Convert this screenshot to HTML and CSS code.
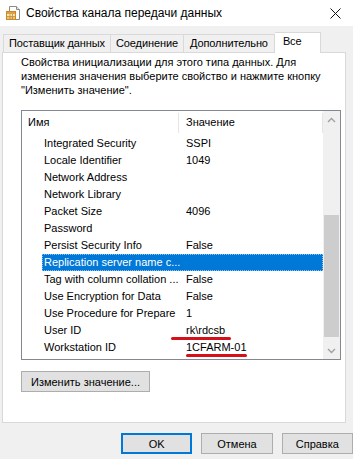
FILE: index.html
```html
<!DOCTYPE html>
<html lang="ru">
<head>
<meta charset="utf-8">
<title>Свойства канала передачи данных</title>
<link rel="stylesheet" href="styles.css">
</head>
<body>
<div class="window">
  <div class="titlebar">
    <svg class="app-icon" width="15" height="15" viewBox="0 0 15 15">
      <path d="M3.5 0.5h7l3 3v10h-10z" fill="#fff" stroke="#8a8a8a"/>
      <path d="M10.5 0.5v3h3" fill="#e8e8e8" stroke="#8a8a8a"/>
      <rect x="0.5" y="5.5" width="9" height="8" fill="#fbe7b5" stroke="#c98a2b"/>
      <rect x="1" y="6" width="8" height="2" fill="#e0a040"/>
      <path d="M1 10.5h8M1 12h8M4 8v5.5M6.5 8v5.5" stroke="#c98a2b" stroke-width="0.8"/>
    </svg>
    <span class="title">Свойства канала передачи данных</span>
    <svg class="close" width="11" height="11" viewBox="0 0 11 11">
      <path d="M0.5 0.5L10.5 10.5M10.5 0.5L0.5 10.5" stroke="#111" stroke-width="1"/>
    </svg>
  </div>

  <div class="tabs">
    <div class="tab">Поставщик данных</div>
    <div class="tab">Соединение</div>
    <div class="tab last">Дополнительно</div>
    <div class="tab active">Все</div>
  </div>

  <div class="panel">
    <p class="desc">Свойства инициализации для этого типа данных. Для изменения значения выберите свойство и нажмите кнопку "Изменить значение".</p>

    <div class="list">
      <div class="list-main">
        <div class="header">
          <div class="hcell hname">Имя</div>
          <div class="hcell hvalue">Значение</div>
        </div>
        <div class="rows">
          <div class="row"><span class="name">Integrated Security</span><span class="value">SSPI</span></div>
          <div class="row"><span class="name">Locale Identifier</span><span class="value">1049</span></div>
          <div class="row"><span class="name">Network Address</span><span class="value"></span></div>
          <div class="row"><span class="name">Network Library</span><span class="value"></span></div>
          <div class="row"><span class="name">Packet Size</span><span class="value">4096</span></div>
          <div class="row"><span class="name">Password</span><span class="value"></span></div>
          <div class="row"><span class="name">Persist Security Info</span><span class="value">False</span></div>
          <div class="row selected"><span class="name">Replication server name c...</span><span class="value"></span></div>
          <div class="row"><span class="name">Tag with column collation ...</span><span class="value">False</span></div>
          <div class="row"><span class="name">Use Encryption for Data</span><span class="value">False</span></div>
          <div class="row"><span class="name">Use Procedure for Prepare</span><span class="value">1</span></div>
          <div class="row"><span class="name">User ID</span><span class="value">rk\rdcsb</span></div>
          <div class="row"><span class="name">Workstation ID</span><span class="value">1CFARM-01</span></div>
        </div>
      </div>
      <div class="scrollbar">
        <div class="sb-btn">
          <svg width="9" height="6" viewBox="0 0 9 6"><path d="M1 5L4.5 1.5L8 5" fill="none" stroke="#a0a0a0" stroke-width="1.4"/></svg>
        </div>
        <div class="sb-track"><div class="sb-thumb"></div></div>
        <div class="sb-btn">
          <svg width="9" height="6" viewBox="0 0 9 6"><path d="M1 1L4.5 4.5L8 1" fill="none" stroke="#a0a0a0" stroke-width="1.4"/></svg>
        </div>
      </div>
      <span class="mark mark1"></span>
      <span class="mark mark2"></span>
    </div>

    <button class="btn change">Изменить значение...</button>
  </div>

  <div class="footer">
    <button class="btn ok">OK</button>
    <button class="btn">Отмена</button>
    <button class="btn">Справка</button>
  </div>
</div>
</body>
</html>
```

FILE: styles.css
```css
* { box-sizing: border-box; }

html, body {
  margin: 0;
  padding: 0;
}

body {
  background: #f0f0f0;
  font-family: "Liberation Sans", Arial, sans-serif;
  font-size: 11px;
  color: #000;
  width: 353px;
  height: 459px;
  overflow: hidden;
}

.window {
  width: 353px;
}

.titlebar {
  height: 26px;
  background: #fff;
  display: flex;
  align-items: center;
  padding-left: 6px;
}

.app-icon {
  flex: none;
}

.title {
  margin-left: 5px;
  font-size: 12px;
  flex: 1;
}

.close {
  margin-right: 12px;
}

.tabs {
  display: flex;
  align-items: flex-end;
  height: 26px;
  padding-left: 3px;
}

.tab {
  height: 18px;
  border: 1px solid #d9d9d9;
  border-bottom: none;
  border-right: none;
  background: #f0f0f0;
  line-height: 17px;
  padding: 0 5px;
  white-space: nowrap;
  letter-spacing: -0.1px;
}

.tab.last {
  border-right: 1px solid #d9d9d9;
  padding: 0 6px;
}

.tab.active {
  height: 21px;
  width: 46px;
  background: #fff;
  border-right: 1px solid #d9d9d9;
  border-left: none;
  margin-bottom: -1px;
  padding: 0 0 0 8px;
  line-height: 17px;
  position: relative;
  z-index: 1;
}

.panel {
  width: 344px;
  height: 371px;
  margin-left: 2px;
  background: #fff;
  border: 1px solid #d9d9d9;
  padding: 2px 0 0 18px;
}

.desc {
  margin: 0;
  line-height: 14px;
  width: 316px;
}

.list {
  margin-top: 13px;
  width: 320px;
  height: 250px;
  border: 1px solid #828790;
  display: flex;
  position: relative;
}

.list-main {
  flex: 1;
  min-width: 0;
}

.header {
  display: flex;
  height: 24px;
}

.hcell {
  white-space: nowrap;
  margin: 2px 0;
  line-height: 18px;
  border-right: 1px solid #e5e5e5;
}

.hname {
  width: 157px;
  padding-left: 6px;
}

.hvalue {
  flex: 1;
  padding-left: 7px;
}

.rows {
  padding-left: 20px;
}

.row {
  display: flex;
  height: 17px;
  line-height: 17px;
  white-space: nowrap;
}

.row .name {
  width: 138px;
  padding-left: 2px;
  overflow: hidden;
}

.row .value {
  flex: 1;
  padding-left: 6px;
}

.row.selected {
  background: #0078d7;
  color: #fff;
  outline: 1px dotted #8fc1ec;
  outline-offset: -1px;
}

.scrollbar {
  width: 17px;
  background: #f0f0f0;
  display: flex;
  flex-direction: column;
}

.sb-btn {
  height: 17px;
  display: flex;
  align-items: center;
  justify-content: center;
}

.sb-track {
  flex: 1;
  padding: 87px 1px 0 1px;
}

.sb-thumb {
  height: 122px;
  background: #cdcdcd;
}

.mark {
  position: absolute;
  height: 3px;
  background: #d4101a;
  border-radius: 2px;
}

.mark1 {
  left: 149px;
  top: 226px;
  width: 60px;
}

.mark2 {
  left: 164px;
  top: 243px;
  width: 61px;
}

.btn {
  font-family: "Liberation Sans", Arial, sans-serif;
  font-size: 11px;
  color: #000;
  background: #e1e1e1;
  border: 1px solid #adadad;
  height: 21px;
  width: 73px;
  padding: 0;
  margin: 0;
}

.change {
  display: block;
  margin-top: 11px;
  width: 129px;
}

.footer {
  display: flex;
  gap: 9px;
  padding-left: 121px;
  margin-top: 10px;
}

.ok {
  border-color: #0078d7;
  box-shadow: inset 0 0 0 1px #0078d7;
}
```
